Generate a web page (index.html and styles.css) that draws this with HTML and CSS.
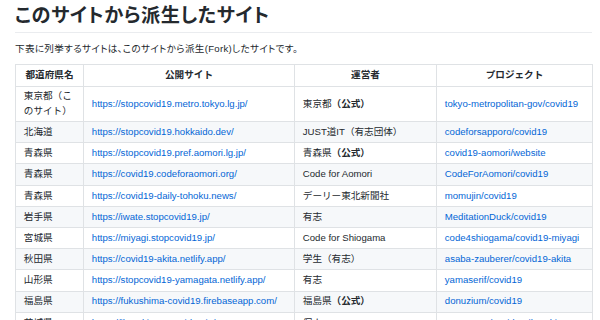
FILE: index.html
```html
<!DOCTYPE html>
<html lang="ja">
<head>
<meta charset="utf-8">
<title>このサイトから派生したサイト</title>
<link rel="stylesheet" href="styles.css">
</head>
<body>
<main class="markdown">
  <h1 class="title">このサイトから派生したサイト</h1>
  <p class="lead">下表に列挙するサイトは、このサイトから派生(Fork)したサイトです。</p>
  <table class="forks">
    <colgroup>
      <col class="c-pref"><col class="c-site"><col class="c-org"><col class="c-proj">
    </colgroup>
    <thead>
      <tr><th>都道府県名</th><th>公開サイト</th><th>運営者</th><th>プロジェクト</th></tr>
    </thead>
    <tbody>
      <tr><td>東京都（このサイト）</td><td><a href="#">https://stopcovid19.metro.tokyo.lg.jp/</a></td><td>東京都<strong>（公式）</strong></td><td><a href="#">tokyo-metropolitan-gov/covid19</a></td></tr>
      <tr><td>北海道</td><td><a href="#">https://stopcovid19.hokkaido.dev/</a></td><td>JUST道IT（有志団体）</td><td><a href="#">codeforsapporo/covid19</a></td></tr>
      <tr><td>青森県</td><td><a href="#">https://stopcovid19.pref.aomori.lg.jp/</a></td><td>青森県<strong>（公式）</strong></td><td><a href="#">covid19-aomori/website</a></td></tr>
      <tr><td>青森県</td><td><a href="#">https://covid19.codeforaomori.org/</a></td><td>Code for Aomori</td><td><a href="#">CodeForAomori/covid19</a></td></tr>
      <tr><td>青森県</td><td><a href="#">https://covid19-daily-tohoku.news/</a></td><td>デーリー東北新聞社</td><td><a href="#">momujin/covid19</a></td></tr>
      <tr><td>岩手県</td><td><a href="#">https://iwate.stopcovid19.jp/</a></td><td>有志</td><td><a href="#">MeditationDuck/covid19</a></td></tr>
      <tr><td>宮城県</td><td><a href="#">https://miyagi.stopcovid19.jp/</a></td><td>Code for Shiogama</td><td><a href="#">code4shiogama/covid19-miyagi</a></td></tr>
      <tr><td>秋田県</td><td><a href="#">https://covid19-akita.netlify.app/</a></td><td>学生（有志）</td><td><a href="#">asaba-zauberer/covid19-akita</a></td></tr>
      <tr><td>山形県</td><td><a href="#">https://stopcovid19-yamagata.netlify.app/</a></td><td>有志</td><td><a href="#">yamaserif/covid19</a></td></tr>
      <tr><td>福島県</td><td><a href="#">https://fukushima-covid19.firebaseapp.com/</a></td><td>福島県<strong>（公式）</strong></td><td><a href="#">donuzium/covid19</a></td></tr>
      <tr><td>茨城県</td><td><a href="#">https://ibaraki.stopcovid19.jp/</a></td><td>個人</td><td><a href="#">a01sa01to/covid19-ibaraki</a></td></tr>
    </tbody>
  </table>
</main>
</body>
</html>
```

FILE: styles.css
```css
html, body {
  margin: 0;
  padding: 0;
  background: #ffffff;
}

body {
  font-family: "Liberation Sans", "Noto Sans CJK JP", sans-serif;
  color: #24292e;
  font-size: 9.6px;
  line-height: 1.5;
}

.markdown {
  padding: 4px 8px 0 15px;
}

.title {
  margin: 0 0 9px;
  font-size: 19.2px;
  font-weight: 700;
  line-height: 1.25;
  padding-bottom: 4px;
  border-bottom: 1px solid #eaecef;
  font-feature-settings: "palt";
  letter-spacing: 0.5px;
}

.lead {
  margin: 0 0 8px;
  font-feature-settings: "palt";
  letter-spacing: 0.3px;
}

.forks {
  width: 100%;
  table-layout: fixed;
  border-collapse: collapse;
  border-spacing: 0;
}

.c-pref { width: 68px; }
.c-site { width: 211px; }
.c-org { width: 142px; }
.c-proj { width: 156px; }

.forks th,
.forks td {
  padding: 2.9px 7.8px;
  border: 1px solid #dfe2e5;
  text-align: left;
  vertical-align: middle;
}

.forks th {
  font-weight: 700;
  text-align: center;
}

.forks tbody tr {
  background: #ffffff;
  border-top: 1px solid #c6cbd1;
}

.forks tbody tr:nth-child(2n) {
  background: #f6f8fa;
}

.forks a {
  color: #0366d6;
  text-decoration: none;
}

.forks strong {
  font-weight: 700;
}
```
